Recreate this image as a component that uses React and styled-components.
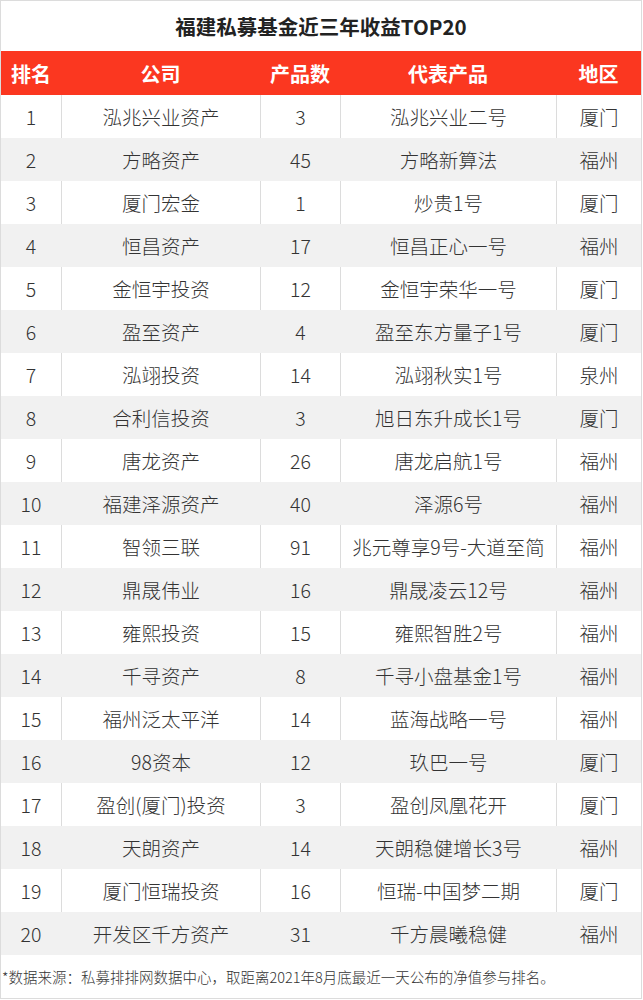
import React from "react";
import styled, { createGlobalStyle } from "styled-components";

const GlobalStyle = createGlobalStyle`
  body {
    margin: 0;
    background: #fff;
    font-family: "Noto Sans CJK SC", "Noto Sans", sans-serif;
  }
`;

const Frame = styled.div`
  box-sizing: border-box;
  width: 642px;
  height: 999px;
  border: 1px solid #dcdcdc;
  display: flex;
  flex-direction: column;
  background: #fff;
`;

const Title = styled.div`
  height: 50px;
  display: flex;
  align-items: center;
  justify-content: center;
  font-size: 20.5px;
  font-weight: 700;
  color: #222;
`;

const Grid = styled.div`
  display: grid;
  grid-template-columns: 60px 199px 80px 216px 85px;
`;

const HeadCell = styled.div`
  height: 44px;
  display: flex;
  align-items: center;
  justify-content: center;
  background: #fb3720;
  color: #fff;
  font-size: 20px;
  font-weight: 700;
`;

const Cell = styled.div`
  height: 43px;
  display: flex;
  align-items: center;
  justify-content: center;
  padding-bottom: 1px;
  font-size: 19.5px;
  font-weight: 300;
  color: #333;
  white-space: nowrap;
  background: ${(p) => (p.$alt ? "#f1f1f1" : "#fff")};
  border-left: ${(p) =>
    p.$first ? "none" : p.$alt ? "1px solid transparent" : "1px solid #dcdcdc"};
  box-sizing: border-box;
`;

const Note = styled.div`
  flex: 1;
  display: flex;
  align-items: center;
  padding-left: 1px;
  font-size: 14.5px;
  font-weight: 300;
  color: #333;
  white-space: nowrap;
`;

const headers = ["排名", "公司", "产品数", "代表产品", "地区"];

const rows = [
  ["泓兆兴业资产", "3", "泓兆兴业二号", "厦门"],
  ["方略资产", "45", "方略新算法", "福州"],
  ["厦门宏金", "1", "炒贵1号", "厦门"],
  ["恒昌资产", "17", "恒昌正心一号", "福州"],
  ["金恒宇投资", "12", "金恒宇荣华一号", "厦门"],
  ["盈至资产", "4", "盈至东方量子1号", "厦门"],
  ["泓翊投资", "14", "泓翊秋实1号", "泉州"],
  ["合利信投资", "3", "旭日东升成长1号", "厦门"],
  ["唐龙资产", "26", "唐龙启航1号", "福州"],
  ["福建泽源资产", "40", "泽源6号", "福州"],
  ["智领三联", "91", "兆元尊享9号-大道至简", "福州"],
  ["鼎晟伟业", "16", "鼎晟凌云12号", "福州"],
  ["雍熙投资", "15", "雍熙智胜2号", "福州"],
  ["千寻资产", "8", "千寻小盘基金1号", "福州"],
  ["福州泛太平洋", "14", "蓝海战略一号", "福州"],
  ["98资本", "12", "玖巴一号", "厦门"],
  ["盈创(厦门)投资", "3", "盈创凤凰花开", "厦门"],
  ["天朗资产", "14", "天朗稳健增长3号", "福州"],
  ["厦门恒瑞投资", "16", "恒瑞-中国梦二期", "厦门"],
  ["开发区千方资产", "31", "千方晨曦稳健", "福州"],
];

export default function App() {
  return (
    <>
      <GlobalStyle />
      <Frame>
        <Title>福建私募基金近三年收益TOP20</Title>
        <Grid>
          {headers.map((h) => (
            <HeadCell key={h}>{h}</HeadCell>
          ))}
          {rows.map((r, i) => {
            const alt = i % 2 === 1;
            return [String(i + 1), ...r].map((v, j) => (
              <Cell key={`${i}-${j}`} $alt={alt} $first={j === 0}>
                {v}
              </Cell>
            ));
          })}
        </Grid>
        <Note>*数据来源：私募排排网数据中心，取距离2021年8月底最近一天公布的净值参与排名。</Note>
      </Frame>
    </>
  );
}
